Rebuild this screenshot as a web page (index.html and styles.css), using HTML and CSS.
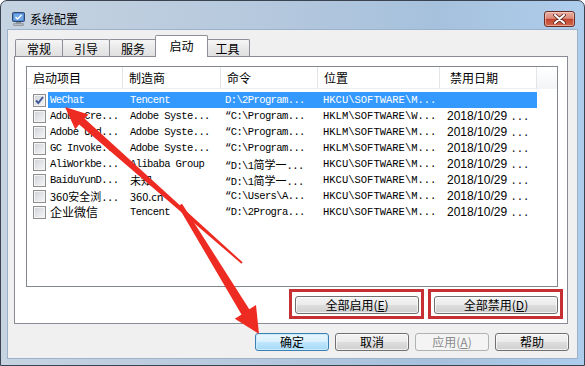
FILE: index.html
```html
<!DOCTYPE html>
<html lang="zh-CN">
<head>
    <meta charset="UTF-8">
    <title>系统配置</title>
    <link rel="stylesheet" href="styles.css">
</head>
<body>

<div class="window">
    <div class="titlebar">
        <svg class="app-icon" width="15" height="14" viewBox="0 0 15 14">
            <rect x="1.5" y="0.5" width="12" height="9" rx="1" fill="#3f6fb5" stroke="#2b4a78"/>
            <rect x="2.5" y="1.5" width="10" height="7" fill="#6ea6e8"/>
            <path d="M4.5 5 L6.5 7 L10.5 3" fill="none" stroke="#fff" stroke-width="1.4"/>
            <rect x="5" y="10" width="5" height="1.5" fill="#8a8f96"/>
            <rect x="2.5" y="11.5" width="10" height="2" rx="0.5" fill="#b6bbc2" stroke="#7d838b" stroke-width="0.6"/>
        </svg>
        <span class="title">系统配置</span>
        <button class="close-btn">
            <svg width="13" height="10" viewBox="0 0 13 10">
                <path d="M2 1 L11 9 M11 1 L2 9" stroke="#5b241c" stroke-width="3.6" stroke-linecap="round"/>
                <path d="M2 1 L11 9 M11 1 L2 9" stroke="#fff" stroke-width="2" stroke-linecap="round"/>
            </svg>
        </button>
    </div>

    <div class="client">
        <div class="tabs">
            <div class="tab">常规</div>
            <div class="tab">引导</div>
            <div class="tab">服务</div>
            <div class="tab active">启动</div>
            <div class="tab narrow">工具</div>
        </div>

        <div class="tab-panel">
            <div class="listview">
                <div class="lv-header">
                    <div class="lv-col">启动项目</div>
                    <div class="lv-col">制造商</div>
                    <div class="lv-col">命令</div>
                    <div class="lv-col">位置</div>
                    <div class="lv-col">禁用日期</div>
                    <div class="lv-col filler"></div>
                </div>
                <div class="lv-body">
                    <div class="lv-row selected">
                        <span class="check checked">
                            <svg width="11" height="11" viewBox="0 0 11 11"><path d="M2 5.5 L4.3 8 L9 2" fill="none" stroke="#41599a" stroke-width="2"/></svg>
                        </span>
                        <div class="cells">
                            <span>WeChat</span>
                            <span>Tencent</span>
                            <span>D:\2Program...</span>
                            <span>HKCU\SOFTWARE\M...</span>
                            <span class="date"></span>
                        </div>
                    </div>
                    <div class="lv-row">
                        <span class="check"></span>
                        <div class="cells">
                            <span>Adobe Cre...</span>
                            <span>Adobe Syste...</span>
                            <span>“C:\Program...</span>
                            <span>HKLM\SOFTWARE\W...</span>
                            <span class="date">2018/10/29 <i>...</i></span>
                        </div>
                    </div>
                    <div class="lv-row">
                        <span class="check"></span>
                        <div class="cells">
                            <span>Adobe Upd...</span>
                            <span>Adobe Syste...</span>
                            <span>“C:\Program...</span>
                            <span>HKLM\SOFTWARE\M...</span>
                            <span class="date">2018/10/29 <i>...</i></span>
                        </div>
                    </div>
                    <div class="lv-row">
                        <span class="check"></span>
                        <div class="cells">
                            <span>GC Invoke...</span>
                            <span>Adobe Syste...</span>
                            <span>“C:\Program...</span>
                            <span>HKLM\SOFTWARE\M...</span>
                            <span class="date">2018/10/29 <i>...</i></span>
                        </div>
                    </div>
                    <div class="lv-row">
                        <span class="check"></span>
                        <div class="cells">
                            <span>AliWorkbe...</span>
                            <span>Alibaba Group</span>
                            <span>“D:\1<b class="han">简学一</b>...</span>
                            <span>HKCU\SOFTWARE\M...</span>
                            <span class="date">2018/10/29 <i>...</i></span>
                        </div>
                    </div>
                    <div class="lv-row">
                        <span class="check"></span>
                        <div class="cells">
                            <span>BaiduYunD...</span>
                            <span><b class="han">未知</b></span>
                            <span>“D:\1<b class="han">简学一</b>...</span>
                            <span>HKCU\SOFTWARE\M...</span>
                            <span class="date">2018/10/29 <i>...</i></span>
                        </div>
                    </div>
                    <div class="lv-row">
                        <span class="check"></span>
                        <div class="cells">
                            <span><b class="han">360安全浏</b>...</span>
                            <span><b class="han">360.cn</b></span>
                            <span>“C:\Users\A...</span>
                            <span>HKCU\SOFTWARE\M...</span>
                            <span class="date">2018/10/29 <i>...</i></span>
                        </div>
                    </div>
                    <div class="lv-row">
                        <span class="check"></span>
                        <div class="cells">
                            <span><b class="han big">企业微信</b></span>
                            <span>Tencent</span>
                            <span>“D:\2Progra...</span>
                            <span>HKCU\SOFTWARE\M...</span>
                            <span class="date">2018/10/29 <i>...</i></span>
                        </div>
                    </div>
                </div>
            </div>

            <div class="panel-actions">
                <span class="mark"><button class="btn wide">全部启用(<u>E</u>)</button></span>
                <span class="mark"><button class="btn wide">全部禁用(<u>D</u>)</button></span>
            </div>
        </div>

        <div class="dialog-actions">
            <button class="btn default">确定</button>
            <button class="btn">取消</button>
            <button class="btn" disabled>应用(<u>A</u>)</button>
            <button class="btn">帮助</button>
        </div>
    </div>

    <!-- annotation arrows drawn over the dialog -->
    <svg class="arrows" width="585" height="366" viewBox="0 0 585 366">
        <polygon fill="#ee2b22" points="65,107 88.5,114.4 84.5,118.6 242.6,262.3 241.4,263.7 79.2,124.6 75.2,129.2"/>
        <polygon fill="#ee2b22" points="259,334 256,305 249.3,309.3 182,203.7 178,206.3 241.5,314.4 234.8,318.7"/>
    </svg>
</div>

</body>
</html>
```

FILE: styles.css
```css
body {
    margin: 0;
    width: 585px;
    height: 366px;
    overflow: hidden;
    font-family: "Noto Sans CJK SC", "Liberation Sans", sans-serif;
    font-size: 12px;
    color: #000;
}

.window {
    position: relative;
    width: 585px;
    height: 366px;
    box-sizing: border-box;
    border: 1px solid #3b4350;
    border-radius: 7px 7px 0 0;
    background: linear-gradient(90deg, #c6d3e1 0%, #b5c8dd 45%, #a6c1dd 75%, #aecdec 100%);
    display: flex;
    flex-direction: column;
}

.titlebar {
    height: 29px;
    box-sizing: border-box;
    padding: 10px 9px 0 10px;
    display: flex;
    align-items: flex-start;
}

.app-icon {
    margin-top: 1px;
}

.title {
    margin-left: 4px;
    line-height: 16px;
    flex: 1;
}

.close-btn {
    width: 31px;
    height: 16px;
    padding: 0;
    border: 1px solid #6b2d25;
    border-radius: 3px;
    background: linear-gradient(#eab0a3, #d98a79 45%, #c3442f 52%, #cf6a51);
    box-shadow: inset 0 0 0 1px rgba(255, 220, 210, 0.5);
    display: flex;
    align-items: center;
    justify-content: center;
}

.client {
    flex: 1;
    margin: 0 7px 7px 7px;
    padding: 5px 9px 0 6px;
    background: #f0f0f0;
    box-shadow: 0 0 0 1px #9cb2ca;
    display: flex;
    flex-direction: column;
}

/* Onglets */
.tabs {
    display: flex;
    align-items: flex-end;
    height: 22px;
    margin: 0 0 -1px 1px;
    position: relative;
    z-index: 1;
}

.tab {
    width: 48px;
    height: 17px;
    box-sizing: border-box;
    margin-bottom: 1px;
    margin-left: -1px;
    border: 1px solid #8d9096;
    border-bottom: none;
    border-radius: 2px 2px 0 0;
    background: linear-gradient(#f6f6f6, #e9e9e9 50%, #e0e0e0);
    text-align: center;
    line-height: 17px;
}

.tab:first-child {
    margin-left: 0;
}

.tab.narrow {
    width: 45px;
}

.tab.active {
    width: 53px;
    height: 22px;
    margin: 0 -2px 0 -2px;
    background: #fff;
    line-height: 19px;
    position: relative;
    z-index: 2;
}

.tab-panel {
    height: 268px;
    box-sizing: border-box;
    border: 1px solid #898c95;
    background: #fff;
    padding: 9px 9px 0 11px;
}

/* Liste */
.listview {
    height: 221px;
    box-sizing: border-box;
    border: 1px solid #828790;
    background: #fff;
}

.lv-header {
    display: grid;
    grid-template-columns: 96px 98px 97px 122px 97px 1fr;
    height: 22px;
    border-bottom: 1px solid #eceef0;
    box-sizing: border-box;
}

.lv-col {
    padding-left: 6px;
    line-height: 22px;
    border-right: 1px solid #e3e5e8;
    white-space: nowrap;
}

.lv-col:nth-child(5) {
    padding-left: 10px;
}

.lv-col.filler {
    border-right: none;
    background: linear-gradient(#fff, #f3f4f6);
}

.lv-body {
    padding-top: 3px;
}

.lv-row {
    display: flex;
    align-items: center;
    height: 16px;
}

.check {
    width: 13px;
    height: 13px;
    box-sizing: border-box;
    margin: 0 2px 0 6px;
    border: 1px solid #8e8f8f;
    background: linear-gradient(135deg, #cdd1d6, #f7f7f7);
    box-shadow: inset 0 0 0 1px #f4f4f4;
    display: flex;
}

.cells {
    display: grid;
    grid-template-columns: 75px 98px 97px 122px 97px;
    height: 16px;
    line-height: 16px;
    font-family: "Liberation Mono", "Noto Sans CJK SC", monospace;
    font-size: 10.5px;
    letter-spacing: -0.6px;
}

.cells span {
    white-space: nowrap;
    overflow: hidden;
}

.cells span:nth-child(1) { padding-left: 2px; }
.cells span:nth-child(2) { padding-left: 7px; }
.cells span:nth-child(3) { padding-left: 4px; }
.cells span:nth-child(4) { padding-left: 5px; letter-spacing: 0; }

.cells .date {
    padding-left: 7px;
    font-family: "Liberation Sans", sans-serif;
    font-size: 12px;
    letter-spacing: 0;
}

.cells .date i {
    font-style: normal;
    font-family: "Liberation Mono", monospace;
    font-size: 10.5px;
}

.han {
    font-weight: normal;
    font-family: "Noto Sans CJK SC", "Liberation Sans", sans-serif;
    font-size: 11px;
    letter-spacing: 0;
}

.han.big {
    font-size: 12px;
}

.lv-row.selected .cells {
    background: #3399ff;
    color: #fff;
}

/* Boutons */
.btn {
    width: 74px;
    height: 18px;
    box-sizing: border-box;
    padding: 0;
    border: 1px solid #707070;
    border-radius: 3px;
    background: linear-gradient(#f3f3f3, #ebebeb 48%, #dddddd 52%, #cfcfcf);
    box-shadow: inset 0 0 0 1px rgba(255, 255, 255, 0.7);
    font-family: "Noto Sans CJK SC", "Liberation Sans", sans-serif;
    font-size: 12px;
    line-height: 16px;
    color: #000;
}

.btn u {
    text-decoration: underline;
}

.btn.wide {
    width: 124px;
}

.btn.default {
    border-color: #3c7fb1;
    background: linear-gradient(#eaf6fd, #d9f0fc 48%, #bee6fd 52%, #a7d9f5);
    box-shadow: inset 0 0 0 1px #c8ecfd;
}

.btn:disabled {
    border-color: #adb2b5;
    background: #f4f4f4;
    color: #8b8b8b;
    box-shadow: none;
}

.panel-actions {
    display: flex;
    justify-content: flex-end;
    gap: 4px;
    margin-top: 2px;
    margin-right: -5px;
}

.mark {
    display: flex;
    padding: 4px 2px 2px 3px;
    border: 3px solid #c62f33;
}

.dialog-actions {
    display: flex;
    justify-content: flex-end;
    gap: 6px;
    margin-top: 9px;
    padding-right: 8px;
    margin-right: -9px;
}

.arrows {
    position: absolute;
    left: -1px;
    top: -1px;
    pointer-events: none;
}
```
